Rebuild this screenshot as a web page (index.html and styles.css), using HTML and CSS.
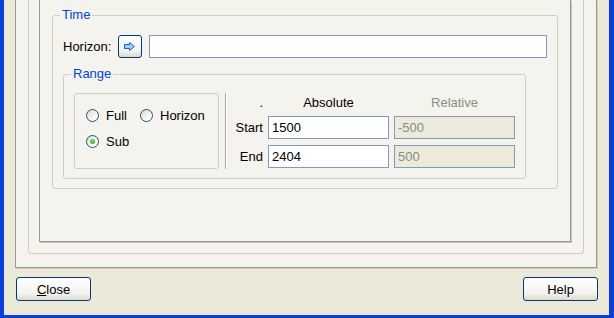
FILE: index.html
```html
<!DOCTYPE html>
<html lang="en">
<head>
    <meta charset="UTF-8">
    <title>Time range</title>
    <link rel="stylesheet" href="styles.css">
</head>
<body>
    <div class="window">
        <div class="client">
            <div class="tabpage">
                <div class="frame">
                    <div class="panel">
                        <fieldset class="group group-time">
                            <legend>Time</legend>
                            <div class="horizon-row">
                                <label class="horizon-label" for="horizon">Horizon:</label>
                                <button class="icon-btn" type="button">
                                    <svg width="12" height="9" viewBox="0 0 12 9">
                                        <path d="M0.5 2.5H5.5V0.5L10.5 4.5L5.5 8.5V6.5H0.5Z" fill="#9ccfff" stroke="#1f5fc4" stroke-width="1" stroke-linejoin="miter"/>
                                    </svg>
                                </button>
                                <input class="field field-wide" type="text" id="horizon">
                            </div>
                            <fieldset class="group group-range">
                                <legend>Range</legend>
                                <div class="range-body">
                                    <div class="radio-box">
                                        <div class="radio-row">
                                            <label class="radio radio-first"><span class="radio-mark"></span>Full</label>
                                            <label class="radio"><span class="radio-mark"></span>Horizon</label>
                                        </div>
                                        <div class="radio-row">
                                            <label class="radio"><span class="radio-mark checked"></span>Sub</label>
                                        </div>
                                    </div>
                                    <div class="separator"></div>
                                    <div class="values">
                                        <span class="cell-label head">.</span>
                                        <span class="col-head">Absolute</span>
                                        <span class="col-head muted">Relative</span>

                                        <span class="cell-label">Start</span>
                                        <input class="field" type="text" value="1500">
                                        <input class="field" type="text" value="-500" disabled>

                                        <span class="cell-label">End</span>
                                        <input class="field" type="text" value="2404">
                                        <input class="field" type="text" value="500" disabled>
                                    </div>
                                </div>
                            </fieldset>
                        </fieldset>
                    </div>
                </div>
            </div>
            <div class="buttons">
                <button class="button" type="button"><u>C</u>lose</button>
                <button class="button" type="button">Help</button>
            </div>
        </div>
    </div>
</body>
</html>
```
FILE: styles.css
```css
body {
    margin: 0;
    font-family: "Liberation Sans", Arial, sans-serif;
    font-size: 13px;
    color: #000;
    background-color: #0a3fe0;
}
.window {
    width: 614px;
    height: 318px;
    box-sizing: border-box;
    border-left: 4px solid #0a3fdc;
    border-right: 5px solid #0a3fdc;
    border-bottom: 3px solid #0a3fdc;
}
.client {
    height: 100%;
    background-color: #ece9d8;
    display: flex;
    flex-direction: column;
}
.tabpage {
    margin-left: 11px;
    width: 582px;
    height: 268px;
    box-sizing: border-box;
    border: 1px solid #919b9c;
    border-top: none;
    box-shadow: 1px 1px 0 #d0cdbd;
    background-color: #f4f3ee;
    padding: 0 12px 13px 12px;
    display: flex;
    flex-direction: column;
}
.frame {
    flex: 1;
    border: 1px solid #d0d0bf;
    border-top: none;
    border-radius: 0 0 3px 3px;
    padding: 0 12px 11px 10px;
    display: flex;
    flex-direction: column;
}
.panel {
    flex: 1;
    border: 1px solid #919b9c;
    border-top: none;
    box-shadow: 1px 1px 0 #c9c6b6;
    padding: 8px 12px 0 12px;
}
.group {
    margin: 0;
    border: 1px solid #d0d0bf;
    border-radius: 3px;
    min-inline-size: 0;
}
/* legend sits inside the padding box, so pull it back toward the corner */
.group legend {
    margin-left: -3px;
    padding: 0 2px;
    line-height: 14px;
    color: #0046d5;
}
.group-time {
    padding: 13px 10px 9px 10px;
}
.group-range {
    width: 463px;
    box-sizing: border-box;
    margin-top: 9px;
    padding: 12px 10px 9px 10px;
}
.horizon-row {
    display: flex;
    align-items: center;
    height: 23px;
}
.horizon-label {
    width: 55px;
}
.icon-btn {
    width: 24px;
    height: 23px;
    padding: 0;
    border: 1px solid #003c74;
    border-radius: 3px;
    background: linear-gradient(#ffffff, #f3f3ef 70%, #dcd8cc);
    display: flex;
    align-items: center;
    justify-content: center;
}
.field {
    height: 23px;
    box-sizing: border-box;
    border: 1px solid #7f9db9;
    padding: 0 3px;
    margin: 0;
    font: inherit;
    color: #000;
    background-color: #fff;
}
.field:disabled {
    background-color: #ebeadb;
    color: #8e8d85;
}
.field-wide {
    flex: 1;
    margin-left: 7px;
}
.range-body {
    display: flex;
}
.radio-box {
    width: 145px;
    height: 76px;
    box-sizing: border-box;
    border: 1px solid #d0d0bf;
    border-radius: 3px;
    padding: 14px 0 0 11px;
    display: flex;
    flex-direction: column;
    gap: 11px;
}
.radio-row {
    display: flex;
    height: 15px;
    align-items: center;
}
.radio {
    display: flex;
    align-items: center;
    gap: 7px;
}
.radio-first {
    width: 54px;
}
.radio-mark {
    width: 13px;
    height: 13px;
    box-sizing: border-box;
    border: 1px solid #1c5180;
    border-radius: 50%;
    background: linear-gradient(135deg, #dcd9cd, #ffffff 80%);
    display: flex;
    align-items: center;
    justify-content: center;
}
.radio-mark.checked::after {
    content: "";
    width: 5px;
    height: 5px;
    border-radius: 50%;
    background: radial-gradient(circle at 40% 40%, #6fe36c, #21a121);
}
.separator {
    margin-left: 6px;
    width: 0;
    height: 76px;
    border-left: 1px solid #aca899;
    border-right: 1px solid #ffffff;
}
.values {
    display: grid;
    grid-template-columns: 36px 121px 121px;
    grid-template-rows: 17px 23px 23px;
    column-gap: 5px;
    row-gap: 6px;
    align-items: center;
}
.cell-label {
    text-align: right;
}
.cell-label.head,
.col-head {
    align-self: start;
    padding-top: 2px;
    line-height: 15px;
}
.col-head {
    text-align: center;
}
.muted {
    color: #8e8d85;
}
.buttons {
    display: flex;
    justify-content: space-between;
    margin-top: 9px;
    padding: 0 11px 0 12px;
}
.button {
    width: 75px;
    height: 24px;
    padding: 0;
    border: 1px solid #003c74;
    border-radius: 3px;
    background: linear-gradient(#ffffff, #f3f3ef 70%, #dcd8cc);
    font: inherit;
    color: #000;
}
```
